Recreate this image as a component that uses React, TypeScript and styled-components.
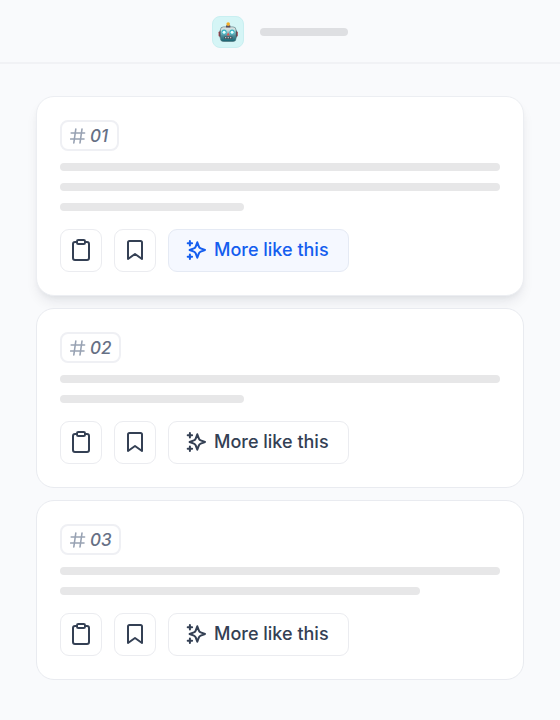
import React from "react";
import styled, { createGlobalStyle } from "styled-components";

const GlobalStyle = createGlobalStyle`
  * { box-sizing: border-box; }
  body { margin: 0; background: #f9fafc; font-family: Inter, "Liberation Sans", sans-serif; }
`;

const Page = styled.div`
  min-height: 720px;
  background: #f9fafc;
`;

const Header = styled.header`
  height: 64px;
  display: flex;
  align-items: center;
  justify-content: center;
  gap: 16px;
  border-bottom: 2px solid #f1f2f5;
`;

const Avatar = styled.div`
  width: 32px;
  height: 32px;
  margin-top: 1px;
  display: grid;
  place-items: center;
  border: 1px solid #c9eff1;
  border-radius: 8px;
  background: #d5f5f6;
`;

const TitleBar = styled.div`
  width: 88px;
  height: 8px;
  margin-top: 1px;
  border-radius: 4px;
  background: #dedfe2;
`;

const List = styled.main`
  display: flex;
  flex-direction: column;
  gap: 12px;
  padding: 32px 36px 40px;
`;

const Card = styled.section<{ $raised?: boolean }>`
  padding: 23px;
  border: 1px solid ${(p) => (p.$raised ? "#eceef2" : "#e9ebf0")};
  border-radius: 18px;
  background: #fff;
  box-shadow: ${(p) =>
    p.$raised ? "0 8px 14px -3px rgba(16, 24, 40, 0.09), 0 3px 6px -2px rgba(16, 24, 40, 0.05)" : "none"};
`;

const Badge = styled.div<{ $width: number }>`
  width: ${(p) => p.$width}px;
  height: 31px;
  display: flex;
  align-items: center;
  gap: 4px;
  padding: 0 0 0 8px;
  border: 2px solid #eff0f4;
  border-radius: 8px;
  color: #667085;
  font-size: 17px;
  font-style: italic;
  font-weight: 500;
  line-height: 20px;
`;

const Lines = styled.div`
  display: grid;
  gap: 12px;
  margin: 12px 0 18px;
`;

const Line = styled.div<{ $width: number }>`
  width: ${(p) => p.$width}px;
  height: 8px;
  border-radius: 4px;
  background: #e7e7e8;
`;

const Actions = styled.div`
  display: flex;
  gap: 12px;
`;

const Button = styled.button<{ $active?: boolean; $wide?: boolean }>`
  width: ${(p) => (p.$wide ? 181 : 42)}px;
  height: 43px;
  display: flex;
  align-items: center;
  justify-content: ${(p) => (p.$wide ? "flex-start" : "center")};
  gap: 8px;
  padding: ${(p) => (p.$wide ? "0 0 1px 17px" : "0 0 1px")};
  border: 1px solid ${(p) => (p.$active ? "#e5eaf4" : "#ebecf0")};
  border-radius: 9px;
  background: ${(p) => (p.$active ? "#f5f8ff" : "#fff")};
  color: ${(p) => (p.$active ? "#155eef" : "#344054")};
  font-family: inherit;
  font-size: 18px;
  font-weight: 500;
  line-height: 24px;
  white-space: nowrap;
`;

const Icon = styled.svg`
  display: block;
  flex: none;
  fill: none;
  stroke: currentColor;
  stroke-width: 2;
  stroke-linecap: round;
  stroke-linejoin: round;
`;

const HashIcon = styled(Icon)`
  color: #98a2b3;
  stroke-width: 1.6;
`;

function Robot() {
  return (
    <svg width="20" height="20" viewBox="0 0 20 20">
      <defs>
        <linearGradient id="face" x1="0" y1="0" x2="0" y2="1">
          <stop offset="0" stopColor="#e1e8e7" />
          <stop offset="0.25" stopColor="#c3d8d9" />
          <stop offset="0.6" stopColor="#4f8f9b" />
          <stop offset="1" stopColor="#16616f" />
        </linearGradient>
      </defs>
      <rect x="0.6" y="9.4" width="2" height="5.2" rx="0.8" fill="#a5404a" />
      <rect x="17.8" y="9.4" width="2" height="5.2" rx="0.8" fill="#a5404a" />
      <rect x="1.7" y="8.5" width="1.2" height="7" fill="#304751" />
      <rect x="17.5" y="8.5" width="1.2" height="7" fill="#304751" />
      <rect x="2.4" y="4.9" width="15.6" height="14.6" rx="3" fill="url(#face)" stroke="#4d7177" strokeWidth="0.6" />
      <rect x="8" y="3.3" width="4.4" height="2.2" rx="0.6" fill="#59505e" />
      <circle cx="10.2" cy="2.1" r="1.8" fill="#f4ae27" />
      <circle cx="6.1" cy="10" r="2.6" fill="#36b4c4" />
      <circle cx="14.1" cy="10" r="2.6" fill="#36b4c4" />
      <circle cx="6.1" cy="10.2" r="1.5" fill="#eaffff" />
      <circle cx="14.1" cy="10.2" r="1.5" fill="#eaffff" />
      <path d="M10.2 10.6 L11.7 13.4 H8.7 Z" fill="#ed5148" />
      <rect x="6" y="14.5" width="8.6" height="2.5" rx="1" fill="#3c5661" />
      <path d="M7.2 15.7h1M9.7 15.7h1M12.2 15.7h1" stroke="#e8d6d4" strokeWidth="1.2" />
    </svg>
  );
}

function Sparkles() {
  return (
    <Icon width="20" height="20" viewBox="0 0 20 20">
      <path d="M3.9 1.1v4.4M1.7 3.3h4.4M3.9 14.5v4.4M1.7 16.7h4.4" />
      <path d="M11.3 2.3l1.6 4.3q.5 1.3 1.8 1.8L19 10l-4.3 1.6q-1.3.5-1.8 1.8l-1.6 4.3-1.6-4.3q-.5-1.3-1.8-1.8L3.6 10l4.3-1.6q1.3-.5 1.8-1.8Z" />
    </Icon>
  );
}

function Clipboard() {
  return (
    <Icon width="24" height="24" viewBox="0 0 24 24">
      <path d="M8 4H6a2 2 0 0 0-2 2v14a2 2 0 0 0 2 2h12a2 2 0 0 0 2-2V6a2 2 0 0 0-2-2h-2" />
      <rect x="8" y="2" width="8" height="4" rx="1.3" />
    </Icon>
  );
}

function Bookmark() {
  return (
    <Icon width="24" height="24" viewBox="0 0 24 24">
      <path d="M5 4.5A1.5 1.5 0 0 1 6.5 3h11A1.5 1.5 0 0 1 19 4.5V21l-7-5-7 5Z" />
    </Icon>
  );
}

const cards = [
  { id: "01", badge: 59, lines: [440, 440, 184], active: true },
  { id: "02", badge: 61, lines: [440, 184], active: false },
  { id: "03", badge: 61, lines: [440, 360], active: false },
];

export default function App() {
  return (
    <Page>
      <GlobalStyle />
      <Header>
        <Avatar><Robot /></Avatar>
        <TitleBar />
      </Header>
      <List>
        {cards.map((card) => (
          <Card key={card.id} $raised={card.active}>
            <Badge $width={card.badge}>
              <HashIcon width="16" height="16" viewBox="0 0 16 16">
                <path d="M1.2 5h13.4M.6 11H14M5.8 1 3.8 15M12 1l-2 14" />
              </HashIcon>
              {card.id}
            </Badge>
            <Lines>
              {card.lines.map((width, i) => <Line key={i} $width={width} />)}
            </Lines>
            <Actions>
              <Button aria-label="Copy"><Clipboard /></Button>
              <Button aria-label="Save"><Bookmark /></Button>
              <Button $wide $active={card.active}><Sparkles />More like this</Button>
            </Actions>
          </Card>
        ))}
      </List>
    </Page>
  );
}
